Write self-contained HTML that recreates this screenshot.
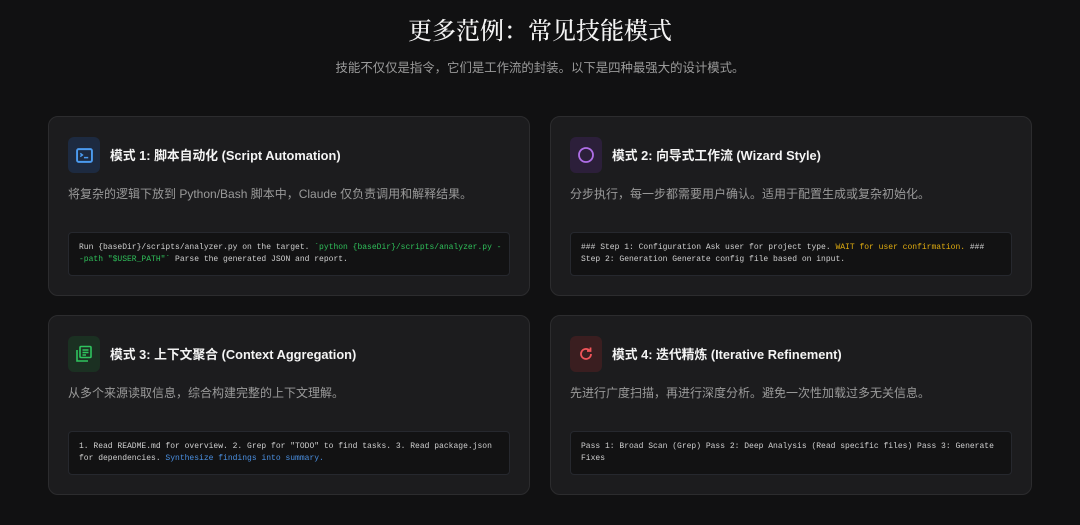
<!DOCTYPE html>
<html><head><meta charset="utf-8"><style>
*{margin:0;padding:0;box-sizing:border-box}
body{width:1080px;height:525px;background:#111112;font-family:"Liberation Sans","Noto Sans CJK SC",sans-serif;color:#eee;position:relative;overflow:hidden}
h1{position:absolute;top:16px;left:0;width:1080px;text-align:center;font-family:"Liberation Serif","Noto Serif CJK SC",serif;font-weight:500;font-size:24px;color:#f4f4f4;line-height:32px}
.sub{position:absolute;top:60px;left:0;width:1080px;text-align:center;font-size:12.4px;color:#9a9a9a;line-height:16px}
.card{position:absolute;width:482px;height:180px;background:#1c1c1e;border:1px solid #2c2c2e;border-radius:10px}
.ic{position:absolute;left:19px;top:20px;width:32px;height:36px;border-radius:6px;display:flex;align-items:center;justify-content:center}
.t{position:absolute;left:61px;top:30px;font-size:12.8px;font-weight:700;color:#f4f4f4;line-height:18px}
.d{position:absolute;left:19px;top:69px;font-size:12px;color:#9a9a9a;line-height:16px}
.code{position:absolute;left:19px;top:115px;width:442px;height:44px;background:#121213;border:1px solid #26282e;border-radius:4px;padding:9px 10px;font-family:"Liberation Mono",monospace;font-size:8px;line-height:12px;color:#cfcfcf;word-break:normal;overflow-wrap:break-word}
.code div{white-space:nowrap}
.g{color:#2fbf5a}.y{color:#e0ac10}.b{color:#4a8fe0}
</style></head><body>
<h1>更多范例：常见技能模式</h1>
<div class="sub">技能不仅仅是指令，它们是工作流的封装。以下是四种最强大的设计模式。</div>

<div class="card" style="left:48px;top:116px">
<div class="ic" style="background:#1d2a40"><svg width="17" height="15" viewBox="0 0 16 14"><rect x="1" y="1" width="14" height="12" rx="1.5" fill="none" stroke="#4b9bf0" stroke-width="1.8"/><path d="M4 5l2 1.5L4 8M7.5 9h4" fill="none" stroke="#4b9bf0" stroke-width="1.4"/></svg></div>
<div class="t">模式 1: 脚本自动化 (Script Automation)</div>
<div class="d">将复杂的逻辑下放到 Python/Bash 脚本中，Claude 仅负责调用和解释结果。</div>
<div class="code"><div>Run {baseDir}/scripts/analyzer.py on the target. <span class="g">`python {baseDir}/scripts/analyzer.py -</span></div><div><span class="g">-path "$USER_PATH"`</span> Parse the generated JSON and report.</div></div>
</div>

<div class="card" style="left:550px;top:116px">
<div class="ic" style="background:#2c1f3a"><svg width="18" height="18" viewBox="0 0 18 18"><circle cx="9" cy="9" r="7" fill="none" stroke="#b06ee8" stroke-width="1.8"/></svg></div>
<div class="t">模式 2: 向导式工作流 (Wizard Style)</div>
<div class="d">分步执行，每一步都需要用户确认。适用于配置生成或复杂初始化。</div>
<div class="code">### Step 1: Configuration Ask user for project type. <span class="y">WAIT for user confirmation.</span> ###<br>Step 2: Generation Generate config file based on input.</div>
</div>

<div class="card" style="left:48px;top:315px">
<div class="ic" style="background:#1b3022"><svg width="18" height="18" viewBox="0 0 18 18" fill="none" stroke="#2fc45e" stroke-width="1.6"><rect x="5" y="1.5" width="11" height="11" rx="1"/><path d="M2 5v11h11M7.5 5h6M7.5 7.5h6M7.5 10h3.5"/></svg></div>
<div class="t">模式 3: 上下文聚合 (Context Aggregation)</div>
<div class="d">从多个来源读取信息，综合构建完整的上下文理解。</div>
<div class="code">1. Read README.md for overview. 2. Grep for "TODO" to find tasks. 3. Read package.json for dependencies. <span class="b">Synthesize findings into summary.</span></div>
</div>

<div class="card" style="left:550px;top:315px">
<div class="ic" style="background:#3a1e20"><svg width="16" height="16" viewBox="0 0 16 16" fill="none" stroke="#f0545a" stroke-width="1.8"><path d="M13 8a5 5 0 1 1-1.6-3.7"/><path d="M12.5 1.5v3.5H9"/></svg></div>
<div class="t">模式 4: 迭代精炼 (Iterative Refinement)</div>
<div class="d">先进行广度扫描，再进行深度分析。避免一次性加载过多无关信息。</div>
<div class="code">Pass 1: Broad Scan (Grep) Pass 2: Deep Analysis (Read specific files) Pass 3: Generate Fixes</div>
</div>
</body></html>
